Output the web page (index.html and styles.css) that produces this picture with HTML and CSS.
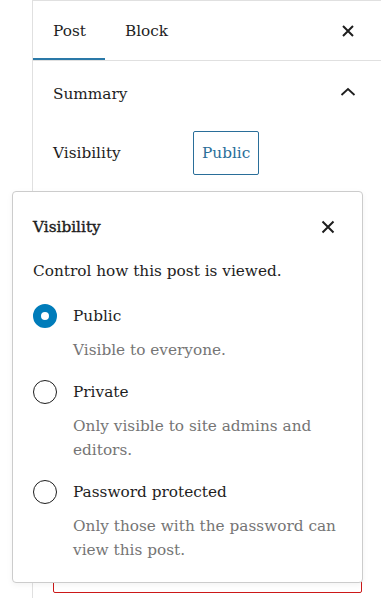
FILE: index.html
```html
<!DOCTYPE html>
<html lang="en">
<head>
  <meta charset="UTF-8" />
  <meta name="viewport" content="width=device-width, initial-scale=1.0"/>
  <title>Post settings</title>
  <link rel="stylesheet" href="styles.css">
</head>
<body>
  <div class="editor">
    <div class="gutter"></div>

    <aside class="sidebar">
      <div class="sidebar-header">
        <div class="tabs">
          <button class="tab is-active">Post</button>
          <button class="tab">Block</button>
        </div>
        <button class="icon-btn" aria-label="Close settings">
          <svg class="icon-close" width="24" height="24" viewBox="0 0 24 24"><path d="M7 7l10 10M17 7L7 17"/></svg>
        </button>
      </div>

      <div class="panel">
        <div class="panel-title">
          <span>Summary</span>
          <svg class="icon-chevron" width="24" height="24" viewBox="0 0 24 24"><path d="M5.5 13L12 7l6.5 6"/></svg>
        </div>

        <div class="row">
          <span class="row-label">Visibility</span>
          <button class="link-btn">Public</button>
        </div>

        <!-- rest of the summary sits under the popover -->
        <button class="trash-btn" aria-label="Move to trash"></button>
      </div>
    </aside>
  </div>

  <!-- visibility popover opened from the "Public" button -->
  <div class="popover">
    <div class="popover-header">
      <h2>Visibility</h2>
      <button class="icon-btn" aria-label="Close">
        <svg class="icon-close" width="24" height="24" viewBox="0 0 24 24"><path d="M6.5 6.5l11 11M17.5 6.5l-11 11"/></svg>
      </button>
    </div>

    <p class="help">Control how this post is viewed.</p>

    <div class="options">
      <div class="option">
        <label class="option-label">
          <input type="radio" name="visibility" checked>
          <span>Public</span>
        </label>
        <p class="option-desc">Visible to everyone.</p>
      </div>
      <div class="option">
        <label class="option-label">
          <input type="radio" name="visibility">
          <span>Private</span>
        </label>
        <p class="option-desc">Only visible to site admins and editors.</p>
      </div>
      <div class="option">
        <label class="option-label">
          <input type="radio" name="visibility">
          <span>Password protected</span>
        </label>
        <p class="option-desc">Only those with the password can view this post.</p>
      </div>
    </div>
  </div>
</body>
</html>
```

FILE: styles.css
```css
body {
  margin: 0;
  font-family: "DejaVu Serif", "Liberation Serif", serif;
  font-size: 15.3px;
  line-height: 24px;
  color: #1e1e1e;
  background: #fff;
}
button {
  font: inherit;
  color: inherit;
  background: none;
  border: none;
  padding: 0;
  cursor: pointer;
}
svg {
  display: block;
  fill: none;
  stroke: #1e1e1e;
}
.icon-close {
  stroke-width: 2;
}
.icon-chevron {
  stroke-width: 1.8;
}
.editor {
  display: flex;
  height: 598px;
  overflow: hidden;
}
.gutter {
  width: 32px;
  flex-shrink: 0;
}
.sidebar {
  flex: 1;
  border-left: 1px solid #e0e0e0;
  border-top: 1px solid #e0e0e0;
}
.sidebar-header {
  display: flex;
  align-items: center;
  justify-content: space-between;
  height: 59px;
  padding-right: 15px;
  border-bottom: 1px solid #e0e0e0;
}
.tabs {
  display: flex;
  height: 100%;
}
.tab {
  padding: 0 19px 0 20px;
  height: 100%;
}
.tab.is-active {
  box-shadow: inset 0 -2px 0 #2a79a8;
}
.icon-btn {
  width: 36px;
  height: 36px;
  display: flex;
  align-items: center;
  justify-content: center;
}
.panel {
  padding: 0 21px 0 20px;
}
.panel-title {
  display: flex;
  align-items: center;
  justify-content: space-between;
  height: 66px;
  margin-bottom: 4px;
}
.row {
  display: flex;
  align-items: center;
  height: 44px;
}
.row-label {
  width: 140px;
}
.link-btn {
  height: 44px;
  padding: 0 8px;
  border: 1px solid #2a6e99;
  border-radius: 2px;
  color: #2a6e99;
}
.trash-btn {
  display: block;
  width: calc(100% + 2px);
  height: 42px;
  margin-top: 376px;
  border: 1px solid #cc1818;
  border-radius: 2px;
}

.popover {
  position: absolute;
  left: 12px;
  top: 191px;
  box-sizing: border-box;
  width: 351px;
  padding: 17px 16px 20px 20px;
  background: #fff;
  border: 1px solid #ccc;
  border-radius: 4px;
  box-shadow: 0 2px 6px rgba(0, 0, 0, 0.05);
}
.popover-header {
  display: flex;
  align-items: center;
  justify-content: space-between;
  height: 36px;
}
.popover-header h2 {
  margin: 0;
  font-size: 15.3px;
  font-weight: normal;
  -webkit-text-stroke: 0.4px #1e1e1e;
}
.help {
  margin: 14px 0 21px;
}
.options {
  display: flex;
  flex-direction: column;
  gap: 18px;
}
.option-label {
  display: flex;
  align-items: center;
  gap: 16px;
}
.option-label input {
  appearance: none;
  margin: 0;
  width: 24px;
  height: 24px;
  border: 1.5px solid #1e1e1e;
  border-radius: 50%;
  background: #fff;
}
.option-label input:checked {
  border: 8px solid #007cba;
}
.option-desc {
  margin: 10px 0 0 40px;
  color: #757575;
}
```
